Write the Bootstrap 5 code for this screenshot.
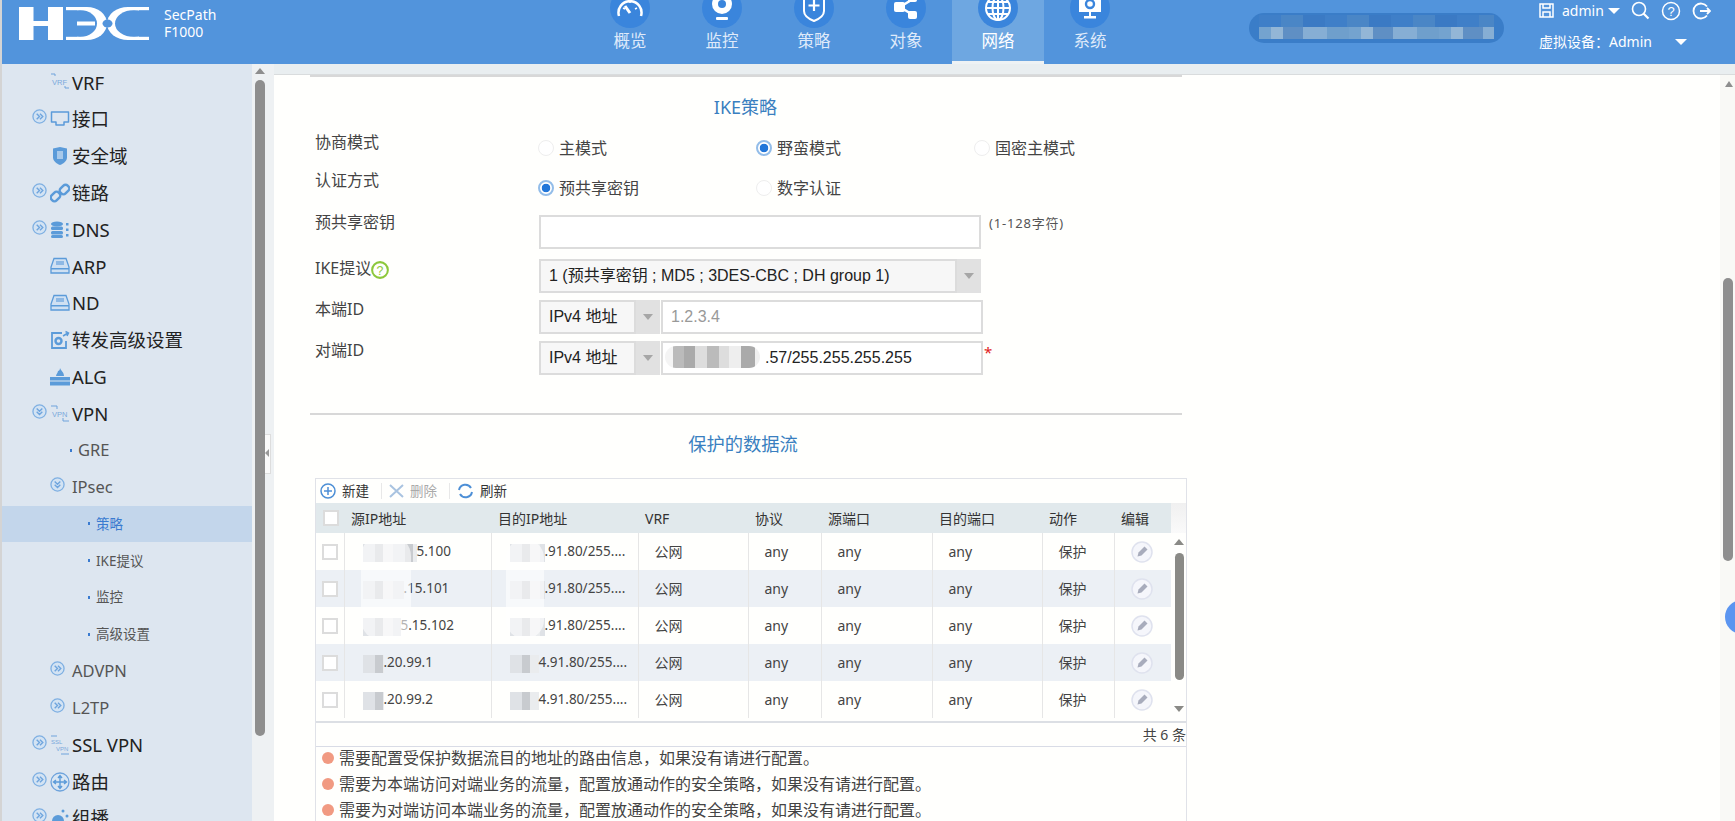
<!DOCTYPE html>
<html lang="zh-CN">
<head>
  <meta charset="UTF-8">
  <title>SecPath F1000</title>
  <link href="https://cdn.jsdelivr.net/npm/bootstrap@5.3.0/dist/css/bootstrap.min.css" rel="stylesheet">
  <style>
    html, body { height: 821px; overflow: hidden; }
    body {
      background: #d4d4d4;
      padding-left: 2px;
      font-family: "Noto Sans", "Noto Sans CJK SC", sans-serif;
      color: #444;
    }
    /* header */
    .topbar { height: 64px; background: #5294dc; color: #fff; }
    .brand { width: 582px; }
    .logo-svg { margin: 7px 0 0 17px; width: 130px; height: 33px; }
    .brand-text { margin: 6px 0 0 15px; font-size: 14px; line-height: 17px; }
    .topnav-item { width: 92px; height: 64px; overflow: hidden; text-align: center; color: #dfeafa; font-size: 16.5px; line-height: 20px; }
    .topnav-item.on { background: #6ea7e1; border-bottom: 3px solid #eef2f4; color: #fff; }
    .topnav-ball { width: 40px; height: 40px; margin: -12px auto 3px; border-radius: 50%; background: #3a85dc; display: flex; align-items: center; justify-content: center; }
    .search-pill { width: 255px; height: 30px; margin: 13px 0 0 113px; padding: 2px 10px 4px; border-radius: 15px; background: #3a7dc8; }
    .pill-dark, .pill-light { height: 12px; background: repeating-linear-gradient(90deg, #3f7fc8 0 22px, #4a86c6 22px 44px, #3b7ac4 44px 66px); }
    .pill-light { background: repeating-linear-gradient(90deg, #74a3cf 0 12px, #93b6d6 12px 24px, #5f8fc4 24px 44px, #86aed4 44px 68px, #6f9fcc 68px 90px); }
    .user-box { margin-left: 35px; font-size: 14px; }
    .user-top { height: 21px; }
    .user-bottom { margin-top: 11px; line-height: 20px; }
    .tri-down { display: inline-block; width: 0; height: 0; border: 6px solid transparent; border-top: 6px solid #fff; border-bottom: 0; }
    .user-caret { margin-left: 23px; }
    .user-tool { margin-left: 11px; }
    /* sidebar */
    .side-menu { width: 250px; height: 757px; overflow: hidden; background: #dde6f0; flex: none; }
    .side-row { height: 36.8px; display: flex; align-items: center; font-size: 18.5px; color: #222; white-space: nowrap; }
    .side-chev { width: 15px; height: 15px; flex: none; margin-top: -5px; }
    .lvl-top { padding-left: 30px; }
    .lvl-top .side-ico { margin-left: 3px; }
    .side-ico { width: 20px; height: 20px; flex: none; margin-right: 2px; }
    .no-chev { padding-left: 48px; }
    .lvl-two { padding-left: 48px; font-size: 16.5px; color: #555; }
    .lvl-two .side-chev { margin-right: 7px; }
    .lvl-leaf { padding-left: 68px; font-size: 16.5px; color: #555; }
    .lvl-three { padding-left: 86px; font-size: 13.5px; color: #555; }
    .side-dot { width: 2px; height: 3px; background: #3a7bd0; margin-right: 6px; flex: none; }
    .side-row.cur { background: #c3d6eb; color: #3a7bd0; }
    .side-rail { width: 22px; flex: none; background: #eef1f3; position: relative; padding: 4px 9px 0 3px; }
    .rail-up { width: 0; height: 0; border: 5px solid transparent; border-bottom: 6px solid #8e8e8e; border-top: 0; margin: 0 auto 6px; }
    .rail-thumb { height: 656px; background: #8e8e8e; border-radius: 5px; }
    .rail-handle { position: absolute; left: 13px; top: 370px; width: 6px; height: 40px; background: #fafafa; border: 1px solid #ddd; border-left: 0; }
    .rail-handle i { position: absolute; left: 0; top: 14px; border: 4px solid transparent; border-right: 4px solid #999; border-left: 0; }
    /* content */
    .band { height: 11px; background: #e9eef0; border-bottom: 1px solid #d9dcdd; }
    .page-body { background: #fffffd; height: 746px; overflow: hidden; }
    .page-col { width: 908px; padding-left: 36px; }
    .rule { border-top: 2px solid #d8d8d8; width: 872px; }
    .rule-two { margin-top: 38px; }
    .sec-title { width: 872px; text-align: center; font-size: 18px; line-height: 24px; color: #3a7fc0; }
    .title-one { margin: 18px 0 14px; padding-right: 1px; }
    .title-two { margin: 17px 0 22px; padding-right: 6px; font-size: 18.3px; }
    .frow { display: flex; width: 900px; }
    .frow-label { width: 229px; padding-left: 5px; font-size: 16px; line-height: 18px; color: #444; flex: none; }
    .label-up { margin-top: -2px; }
    .frow-gap8 { margin-top: 8px; }
    .frow-gap10 { margin-top: 10px; }
    .frow-gap7 { margin-top: 7px; }
    .radio-cell { display: flex; align-items: center; gap: 5px; font-size: 16px; color: #444; width: 218px; height: 30px; flex: none; margin: 0; }
    .radio-tall { height: 34px; }
    .radio-cell .form-check-input { width: 16px; height: 16px; margin: 0 0 0 -1px; border: 1px solid #eee; flex: none; }
    .radio-cell .form-check-input:checked { background-color: #fff; border: 2px solid #93bde9; background-image: radial-gradient(circle, #2176d9 0 4px, transparent 4.6px); }
    .box-ctl { height: 34px; border: 2px solid #dcdcdc; border-radius: 0; background: #fff; font-family: "Liberation Sans", "Noto Sans CJK SC", sans-serif; font-size: 16px; color: #222; padding: 0 8px; box-shadow: none; }
    .box-ctl::placeholder { color: #999; }
    .sel-ctl { background: #f7f7f7; background-image: none; }
    .arrow-cell { width: 24px; height: 34px; background: #e1e1e1; flex: none; display: flex; align-items: center; justify-content: center; }
    .arrow-cell i { border: 5px solid transparent; border-top: 6px solid #a6a6a6; border-bottom: 0; }
    .hint { font-size: 13px; letter-spacing: .8px; margin: 0 0 0 8px; line-height: 16px; color: #555; }
    .req-mark { color: #e02020; font-size: 15px; line-height: 16px; margin: 3px 0 0 1px; }
    .key-input { width: 442px; flex: none; }
    .prop-sel { width: 418px; }
    .type-sel { width: 97px; }
    .id-input { width: 322px; margin-left: 1px; }
    .addr-wrap { position: relative; }
    .addr-text { padding-left: 102px; }
    .addr-mask { position: absolute; left: 5px; top: 5px; width: 95px; height: 22px; border-radius: 11px; background: linear-gradient(90deg, #f4f4f4 0 8px, #bbb 8px 19px, #aaa 19px 30px, #ddd 30px 42px, #bbb 42px 54px, #ddd 54px 64px, #eee 64px 76px, #aaa 76px 90px, #f0f0f0 90px); }
    /* table block */
    .grid-box { width: 872px; margin-left: 5px; border: 1px solid #e0e2e8; border-bottom: 0; position: relative; height: 343px; overflow: hidden; }
    .grid-tools { height: 24px; font-size: 13.5px; color: #333; padding-left: 4px; gap: 6px; }
    .tool-sep { width: 1px; height: 16px; background: #e8e8e8; margin: 0 1px 0 6px; }
    .tool-off { color: #aaa; }
    .grid-head-strip { width: 16px; background: linear-gradient(#f0f0f0, #fafafa); height: 30px; }
    .grid-tbl { table-layout: fixed; width: 855px; margin: 0; font-size: 14px; border-collapse: collapse; color: #444; }
    .grid-tbl th { height: 30px; background: #e1e9ec; font-weight: 400; color: #333; padding: 0 0 0 7px; border: 0; vertical-align: middle; }
    .grid-tbl td { height: 37px; padding: 0 0 0 16px; border: 0; border-left: 1px solid #e6e6e6; vertical-align: middle; white-space: nowrap; background: #fffffd; }
    .grid-tbl tr:nth-child(even) td { background: #ecf0f5; }
    .grid-tbl td:first-child { border-left: 0; padding-left: 6px; }
    .grid-tbl td.td-mask { padding-left: 18px; font-size: 13.5px; }
    .grid-tbl .form-check-input { width: 16px; height: 16px; margin: 0; border: 2px solid #dcdcdc; border-radius: 0; display: block; }
    .c-a { width: 28px; } .c-b { width: 147px; } .c-c { width: 147px; } .c-d { width: 110px; } .c-e { width: 73px; }
    .c-f { width: 111px; } .c-g { width: 110px; } .c-h { width: 72px; } .c-i { width: 57px; }
    .grid-scroll { width: 16px; flex: none; height: 185px; position: relative; }
    .scroll-up, .scroll-down { position: absolute; left: 3px; width: 0; height: 0; border: 5px solid transparent; }
    .scroll-up { top: 6px; border-bottom: 6px solid #8a8a86; border-top: 0; }
    .scroll-down { top: 173px; border-top: 6px solid #8a8a86; border-bottom: 0; }
    .scroll-thumb { position: absolute; left: 4px; top: 20px; width: 9px; height: 127px; border-radius: 5px; background: #8a8a86; }
    .msk { display: inline-block; height: 18px; vertical-align: middle; background: repeating-linear-gradient(90deg, #dfe2e6 0 12px, #c8cbcf 12px 20px, #eaecee 20px 30px); }
    .smudge { position: absolute; background: rgba(255,255,255,.6); border-radius: 20px; }
    .smudge-a { left: 45px; top: 57px; width: 50px; height: 104px; }
    .smudge-b { left: 190px; top: 60px; width: 38px; height: 100px; }
    .grid-foot { height: 26px; margin-top: 3px; border-top: 2px solid #dcdfe4; border-bottom: 1px solid #d9dce6; text-align: right; font-size: 14px; line-height: 24px; color: #444; }
    .note-list { margin-top: -2px; }
    .note-row { display: flex; align-items: center; gap: 5px; height: 26px; padding-left: 6px; font-size: 16px; color: #444; white-space: nowrap; }
    .note-dot { width: 12px; height: 12px; border-radius: 50%; background: #f19a82; flex: none; }
    /* page right rail */
    .page-rail { width: 15px; flex: none; background: #f9f9f6; position: relative; }
    .rail-up-r { position: absolute; top: 6px; left: 5px; border: 4px solid transparent; border-bottom: 6px solid #8e8e8e; border-top: 0; }
    .thumb-r { position: absolute; left: 3px; top: 203px; width: 10px; height: 283px; background: #8e8e8e; border-radius: 5px; }
    .float-ball { position: absolute; left: 5px; top: 525px; width: 34px; height: 34px; border-radius: 50%; background: #5b95f0; }
  </style>
</head>
<body>
  <svg width="0" height="0" class="position-absolute">
    <symbol id="chev-r" viewBox="0 0 16 16"><circle cx="8" cy="8" r="7" fill="#d3e3f3" stroke="#7fb0e2" stroke-width="1.4"/><path d="M5 5l3 3-3 3M8.5 5l3 3-3 3" fill="none" stroke="#6fa5de" stroke-width="1.5"/></symbol>
    <symbol id="chev-d" viewBox="0 0 16 16"><circle cx="8" cy="8" r="7" fill="#d3e3f3" stroke="#7fb0e2" stroke-width="1.4"/><path d="M5 4.800l3 3 3-3M5 8.200l3 3 3-3" fill="none" stroke="#6fa5de" stroke-width="1.5"/></symbol>
    <symbol id="ico-port" viewBox="0 0 20 20"><path d="M1.500 3h17v10h-4.500v3h-8v-3h-4.500z" fill="none" stroke="#5b9bd9" stroke-width="1.500" stroke-linejoin="round"/></symbol>
    <symbol id="ico-shield" viewBox="0 0 20 20"><path d="M10 1l7 1.500v9c0 3.500-3.500 6-7 7.500-3.500-1.500-7-4-7-7.500v-9z" fill="#5b9bd9"/><rect x="7" y="5" width="6" height="8" fill="#a8c9ea"/></symbol>
    <symbol id="ico-link" viewBox="0 0 20 20"><g fill="none" stroke="#5b9bd9" stroke-width="2.400"><rect x="11" y="1.500" width="7" height="10" rx="3" transform="rotate(45 14.500 6.500)"/><rect x="2" y="8.500" width="7" height="10" rx="3" transform="rotate(45 5.500 13.500)"/></g></symbol>
    <symbol id="ico-dns" viewBox="0 0 20 20"><g fill="#5b9bd9"><ellipse cx="7" cy="4" rx="6" ry="2.500"/><rect x="1" y="6.500" width="12" height="3.500" rx="1.500"/><rect x="1" y="11" width="12" height="3.500" rx="1.500"/><rect x="1" y="15" width="12" height="3" rx="1.500"/><rect x="16" y="3" width="2.500" height="2.500"/><rect x="16" y="8.500" width="2.500" height="2.500"/><rect x="16" y="14" width="2.500" height="2.500"/></g></symbol>
    <symbol id="ico-hdd" viewBox="0 0 20 20"><path d="M4 2.500h12l3 8.500v6h-18v-6z" fill="#cfe0f2" stroke="#5b9bd9" stroke-width="1.300"/><rect x="1" y="12" width="18" height="1.500" fill="#5b9bd9"/><rect x="6" y="5" width="8" height="4" fill="#8db8e4"/></symbol>
    <symbol id="ico-fwd" viewBox="0 0 20 20"><path d="M12 3H2v15h14v-7" fill="none" stroke="#5b9bd9" stroke-width="1.800"/><circle cx="8.500" cy="11" r="3" fill="none" stroke="#5b9bd9" stroke-width="2.400"/><path d="M13 6l5-3M15.500 1.500l3 1.500-1.500 3" fill="none" stroke="#5b9bd9" stroke-width="1.500"/></symbol>
    <symbol id="ico-alg" viewBox="0 0 20 20"><path d="M10 1c1 3 4 4 4 8H6c0-2 2-3 2-5 1 0 2-1 2-3z" fill="#5b9bd9"/><g fill="#5b9bd9"><rect y="10" width="20" height="3.500"/><rect y="14.500" width="20" height="4"/></g></symbol>
    <symbol id="ico-route" viewBox="0 0 20 20"><circle cx="10" cy="10" r="9" fill="#d9e6f3" stroke="#6ea3dc" stroke-width="1.300"/><path d="M10 4v12M4 10h12M8 6l2-2.500L12 6M8 14l2 2.500 2-2.500M6 8l-2.500 2L6 12M14 8l2.500 2-2.500 2" fill="none" stroke="#5b9bd9" stroke-width="1.400"/></symbol>
    <symbol id="ico-cast" viewBox="0 0 20 20"><circle cx="8" cy="13" r="6" fill="#5b9bd9"/><circle cx="13" cy="3" r="1.500" fill="#5b9bd9"/><circle cx="17" cy="8" r="1.500" fill="#5b9bd9"/></symbol>
    <symbol id="ico-edit" viewBox="0 0 22 22"><circle cx="11" cy="11" r="10" fill="#f5f6fb" stroke="#dfe2ee" stroke-width="1.500"/><path d="M6.500 15.500l1-4 6-6 3 3-6 6z" fill="#a8acbc"/></symbol>
  </svg>

  <header class="topbar d-flex">
    <div class="brand d-flex flex-shrink-0">
      <svg class="logo-svg" viewBox="0 0 130 33" role="img" aria-label="H3C">
        <g fill="#fff">
          <rect x="0" y="0" width="14.500" height="33"/><rect x="29" y="0" width="15" height="33"/><rect x="14" y="14" width="15" height="5"/>
          <ellipse cx="68" cy="16.500" rx="20" ry="16.500"/>
          <ellipse cx="109" cy="16.500" rx="21" ry="16.500"/>
        </g>
        <g fill="#5294dc">
          <ellipse cx="61" cy="16.500" rx="17" ry="13.500"/><rect x="44" y="3" width="14" height="27"/>
          <ellipse cx="115" cy="16.500" rx="19" ry="13.500"/><rect x="120" y="3" width="10" height="27"/>
          <ellipse cx="88.500" cy="16.500" rx="5" ry="4"/>
        </g>
        <g fill="#fff">
          <rect x="47" y="0" width="21" height="3.200"/><rect x="47" y="29.800" width="21" height="3.200"/>
          <rect x="58" y="14.500" width="18" height="4"/>
          <rect x="109" y="0" width="21" height="3.200"/><rect x="109" y="29.800" width="21" height="3.200"/>
        </g>
      </svg>
      <div class="brand-text">SecPath<br>F1000</div>
    </div>
    <nav class="d-flex flex-shrink-0">
      <div class="topnav-item"><div class="topnav-ball"><svg width="28" height="28" viewBox="0 0 28 28" fill="none" stroke="#fff" stroke-width="2.500"><path d="M3 22a11.500 11.500 0 1 1 22 0"/><path d="M14 19l-5-7" stroke-width="3"/><path d="M7 14l2 1M14 7v2M21 14l-2 1" stroke-width="1.500"/></svg></div>概览</div>
      <div class="topnav-item"><div class="topnav-ball"><svg width="28" height="30" viewBox="0 0 28 30"><circle cx="14" cy="11" r="10" fill="#fff"/><circle cx="14" cy="11" r="4" fill="#3a85dc"/><rect x="8" y="24" width="12" height="3" rx="1" fill="#fff"/></svg></div>监控</div>
      <div class="topnav-item"><div class="topnav-ball"><svg width="26" height="30" viewBox="0 0 26 30"><path d="M3 0h20v18c0 5-5 8-10 10C8 26 3 23 3 18z" fill="#3a85dc" stroke="#fff" stroke-width="2"/><path d="M13 7v11M7.500 12.500h11" stroke="#fff" stroke-width="2.200"/></svg></div>策略</div>
      <div class="topnav-item"><div class="topnav-ball"><svg width="26" height="28" viewBox="0 0 26 28" fill="#fff"><path d="M7 13L20 5M7 13l13 8" stroke="#fff" stroke-width="2.500"/><rect x="1" y="8" width="11" height="10" rx="2"/><rect x="15" y="0" width="9" height="8" rx="2"/><rect x="15" y="17" width="9" height="8" rx="2"/></svg></div>对象</div>
      <div class="topnav-item on"><div class="topnav-ball"><svg width="28" height="28" viewBox="0 0 28 28" fill="none" stroke="#fff" stroke-width="2"><circle cx="14" cy="14" r="12"/><ellipse cx="14" cy="14" rx="5.500" ry="12"/><path d="M14 2v24M2 14h24M4 8h20M4 20h20"/></svg></div>网络</div>
      <div class="topnav-item"><div class="topnav-ball"><svg width="24" height="28" viewBox="0 0 24 28"><path d="M1 2h22v16H1z" fill="#fff"/><circle cx="12" cy="10" r="4" fill="none" stroke="#3a85dc" stroke-width="2.400"/><rect x="6" y="22" width="12" height="2.500" fill="#fff"/><rect x="11" y="18" width="2" height="4" fill="#fff"/></svg></div>系统</div>
    </nav>
    <div class="search-pill flex-shrink-0"><div class="pill-dark"></div><div class="pill-light"></div></div>
    <div class="user-box flex-shrink-0">
      <div class="user-top d-flex align-items-center">
        <svg width="15" height="15" viewBox="0 0 15 15" fill="none" stroke="#fff" stroke-width="1.500" class="me-2"><path d="M1 1h13v13H1zM4 1v4h7V1M4 14V9h7v5"/></svg>
        <span>admin</span><span class="tri-down ms-1"></span>
        <svg width="19" height="19" viewBox="0 0 19 19" fill="none" stroke="#fff" stroke-width="1.600" class="user-tool"><circle cx="8" cy="8" r="6.500"/><path d="M12.500 12.500l5 5" stroke-width="2.200"/></svg>
        <svg width="20" height="20" viewBox="0 0 20 20" fill="none" stroke="#fff" stroke-width="1.500" class="user-tool"><circle cx="10" cy="10" r="8.500"/><text x="10" y="14.500" font-size="13" text-anchor="middle" fill="#fff" stroke="none" font-family="Liberation Sans">?</text></svg>
        <svg width="19" height="18" viewBox="0 0 19 18" fill="none" stroke="#fff" stroke-width="1.800" class="user-tool"><path d="M15 4.500A7.500 7.500 0 1 0 15 13.500M8 9h10M15 6l3 3-3 3"/></svg>
      </div>
      <div class="user-bottom d-flex align-items-center">虚拟设备：Admin<span class="tri-down user-caret"></span></div>
    </div>
  </header>

  <div class="d-flex">
    <aside class="side-menu">
      <div class="side-row no-chev"><svg class="side-ico" viewBox="0 0 20 20"><path d="M1 2h4v2M19 16h-4v-2" fill="none" stroke="#6ea3dc"/><text x="2" y="13" font-size="7.500" font-family="Liberation Sans" fill="#7aa9dc">VRF</text></svg>VRF</div>
      <div class="side-row lvl-top"><svg class="side-chev"><use href="#chev-r"/></svg><svg class="side-ico"><use href="#ico-port"/></svg>接口</div>
      <div class="side-row no-chev"><svg class="side-ico"><use href="#ico-shield"/></svg>安全域</div>
      <div class="side-row lvl-top"><svg class="side-chev"><use href="#chev-r"/></svg><svg class="side-ico"><use href="#ico-link"/></svg>链路</div>
      <div class="side-row lvl-top"><svg class="side-chev"><use href="#chev-r"/></svg><svg class="side-ico"><use href="#ico-dns"/></svg>DNS</div>
      <div class="side-row no-chev"><svg class="side-ico"><use href="#ico-hdd"/></svg>ARP</div>
      <div class="side-row no-chev"><svg class="side-ico"><use href="#ico-hdd"/></svg>ND</div>
      <div class="side-row no-chev"><svg class="side-ico"><use href="#ico-fwd"/></svg>转发高级设置</div>
      <div class="side-row no-chev"><svg class="side-ico"><use href="#ico-alg"/></svg>ALG</div>
      <div class="side-row lvl-top"><svg class="side-chev"><use href="#chev-d"/></svg><svg class="side-ico" viewBox="0 0 20 20"><path d="M1 2h6v3M19 17h-6v-3" fill="none" stroke="#6ea3dc"/><text x="2" y="13" font-size="7.500" font-family="Liberation Sans" fill="#7aa9dc">VPN</text></svg>VPN</div>
      <div class="side-row lvl-leaf"><span class="side-dot"></span>GRE</div>
      <div class="side-row lvl-two"><svg class="side-chev"><use href="#chev-d"/></svg>IPsec</div>
      <div class="side-row lvl-three cur"><span class="side-dot"></span>策略</div>
      <div class="side-row lvl-three"><span class="side-dot"></span>IKE提议</div>
      <div class="side-row lvl-three"><span class="side-dot"></span>监控</div>
      <div class="side-row lvl-three"><span class="side-dot"></span>高级设置</div>
      <div class="side-row lvl-two"><svg class="side-chev"><use href="#chev-r"/></svg>ADVPN</div>
      <div class="side-row lvl-two"><svg class="side-chev"><use href="#chev-r"/></svg>L2TP</div>
      <div class="side-row lvl-top"><svg class="side-chev"><use href="#chev-r"/></svg><svg class="side-ico" viewBox="0 0 20 20"><path d="M1 1h6M19 19h-8" fill="none" stroke="#6ea3dc"/><text x="1" y="9" font-size="6" font-family="Liberation Sans" fill="#7aa9dc">SSL</text><text x="6" y="16" font-size="6" font-family="Liberation Sans" fill="#7aa9dc">VPN</text></svg>SSL VPN</div>
      <div class="side-row lvl-top"><svg class="side-chev"><use href="#chev-r"/></svg><svg class="side-ico"><use href="#ico-route"/></svg>路由</div>
      <div class="side-row lvl-top"><svg class="side-chev"><use href="#chev-r"/></svg><svg class="side-ico"><use href="#ico-cast"/></svg>组播</div>
    </aside>
    <div class="side-rail">
      <div class="rail-up"></div>
      <div class="rail-thumb"></div>
      <div class="rail-handle"><i></i></div>
    </div>
    <main class="flex-grow-1">
      <div class="band"></div>
      <div class="page-body d-flex">
        <div class="page-col flex-shrink-0">
          <div class="rule"></div>
          <div class="sec-title title-one">IKE策略</div>
          <div class="frow">
            <div class="frow-label">协商模式</div>
            <div class="d-flex">
              <label class="radio-cell"><input class="form-check-input" type="radio" name="mode">主模式</label>
              <label class="radio-cell"><input class="form-check-input" type="radio" name="mode" checked>野蛮模式</label>
              <label class="radio-cell"><input class="form-check-input" type="radio" name="mode">国密主模式</label>
            </div>
          </div>
          <div class="frow frow-gap8">
            <div class="frow-label">认证方式</div>
            <div class="d-flex">
              <label class="radio-cell radio-tall"><input class="form-check-input" type="radio" name="auth" checked>预共享密钥</label>
              <label class="radio-cell radio-tall"><input class="form-check-input" type="radio" name="auth">数字认证</label>
            </div>
          </div>
          <div class="frow frow-gap10">
            <div class="frow-label label-up">预共享密钥</div>
            <input class="form-control box-ctl key-input" type="text">
            <div class="hint">(1-128字符)</div>
          </div>
          <div class="frow frow-gap10">
            <div class="frow-label">IKE提议<svg width="18" height="18" viewBox="0 0 16 16" fill="none" class="align-text-bottom"><circle cx="8" cy="8" r="7" stroke="#8cc83c" stroke-width="1.800"/><text x="8" y="12" font-size="11" text-anchor="middle" fill="#8cc83c" font-family="Liberation Sans">?</text></svg></div>
            <select class="form-select box-ctl sel-ctl prop-sel"><option>1 (预共享密钥 ; MD5 ; 3DES-CBC ; DH group 1)</option></select>
            <div class="arrow-cell"><i></i></div>
          </div>
          <div class="frow frow-gap7">
            <div class="frow-label">本端ID</div>
            <select class="form-select box-ctl sel-ctl type-sel"><option>IPv4 地址</option></select>
            <div class="arrow-cell"><i></i></div>
            <input class="form-control box-ctl id-input" type="text" placeholder="1.2.3.4">
          </div>
          <div class="frow frow-gap7">
            <div class="frow-label">对端ID</div>
            <select class="form-select box-ctl sel-ctl type-sel"><option>IPv4 地址</option></select>
            <div class="arrow-cell"><i></i></div>
            <div class="addr-wrap">
              <input class="form-control box-ctl id-input addr-text" type="text" value=".57/255.255.255.255">
              <span class="addr-mask"></span>
            </div>
            <span class="req-mark">*</span>
          </div>
          <div class="rule rule-two"></div>
          <div class="sec-title title-two">保护的数据流</div>
          <div class="grid-box">
            <div class="grid-tools d-flex align-items-center">
              <svg width="16" height="16" viewBox="0 0 16 16" fill="none" stroke="#4d8fd6" stroke-width="1.500"><circle cx="8" cy="8" r="7"/><path d="M8 4v8M4 8h8"/></svg><span>新建</span>
              <span class="tool-sep"></span>
              <svg width="15" height="14" viewBox="0 0 15 14" fill="none" stroke="#a9c3e0" stroke-width="2"><path d="M1 1l13 12M14 1L1 13"/></svg><span class="tool-off">删除</span>
              <span class="tool-sep"></span>
              <svg width="17" height="16" viewBox="0 0 17 16" fill="none" stroke="#4d8fd6" stroke-width="2"><path d="M2 7a6.500 6.500 0 0 1 12-2M15 9a6.500 6.500 0 0 1-12 2"/></svg><span>刷新</span>
            </div>
            <div class="d-flex">
              <table class="grid-tbl flex-shrink-0">
                <colgroup><col class="c-a"><col class="c-b"><col class="c-c"><col class="c-d"><col class="c-e"><col class="c-f"><col class="c-g"><col class="c-h"><col class="c-i"></colgroup>
                <thead>
                  <tr><th><input class="form-check-input" type="checkbox"></th><th>源IP地址</th><th>目的IP地址</th><th>VRF</th><th>协议</th><th>源端口</th><th>目的端口</th><th>动作</th><th>编辑</th></tr>
                </thead>
                <tbody id="flowRows"></tbody>
              </table>
              <div>
                <div class="grid-head-strip"></div>
                <div class="grid-scroll"><span class="scroll-up"></span><span class="scroll-thumb"></span><span class="scroll-down"></span></div>
              </div>
            </div>
            <span class="smudge smudge-a"></span>
            <span class="smudge smudge-b"></span>
            <div class="grid-foot">共 6 条</div>
            <div class="note-list">
              <div class="note-row"><span class="note-dot"></span>需要配置受保护数据流目的地址的路由信息，如果没有请进行配置。</div>
              <div class="note-row"><span class="note-dot"></span>需要为本端访问对端业务的流量，配置放通动作的安全策略，如果没有请进行配置。</div>
              <div class="note-row"><span class="note-dot"></span>需要为对端访问本端业务的流量，配置放通动作的安全策略，如果没有请进行配置。</div>
            </div>
          </div>
        </div>
        <div class="flex-grow-1"></div>
        <div class="page-rail"><span class="rail-up-r"></span><span class="thumb-r"></span><span class="float-ball"></span></div>
      </div>
    </main>
  </div>

  <script src="https://cdn.jsdelivr.net/npm/bootstrap@5.3.0/dist/js/bootstrap.bundle.min.js"></script>
  <script>
    const flows = [
      { mask: 54, src: '5.100', maskTo: 35, dst: '.91.80/255....' },
      { mask: 41, src: '.15.101', maskTo: 35, dst: '.91.80/255....' },
      { mask: 38, src: '5.15.102', maskTo: 35, dst: '.91.80/255....' },
      { mask: 21, src: '.20.99.1', maskTo: 29, dst: '4.91.80/255....' },
      { mask: 21, src: '.20.99.2', maskTo: 29, dst: '4.91.80/255....' }
    ];
    const body = document.getElementById('flowRows');
    flows.forEach(f => {
      const tr = document.createElement('tr');
      tr.innerHTML = `
        <td><input class="form-check-input" type="checkbox"></td>
        <td class="td-mask"><span class="msk" style="width:${f.mask}px"></span>${f.src}</td>
        <td class="td-mask"><span class="msk" style="width:${f.maskTo}px"></span>${f.dst}</td>
        <td>公网</td><td>any</td><td>any</td><td>any</td><td>保护</td>
        <td><svg width="22" height="22"><use href="#ico-edit"/></svg></td>`;
      body.appendChild(tr);
    });
  </script>
</body>
</html>
